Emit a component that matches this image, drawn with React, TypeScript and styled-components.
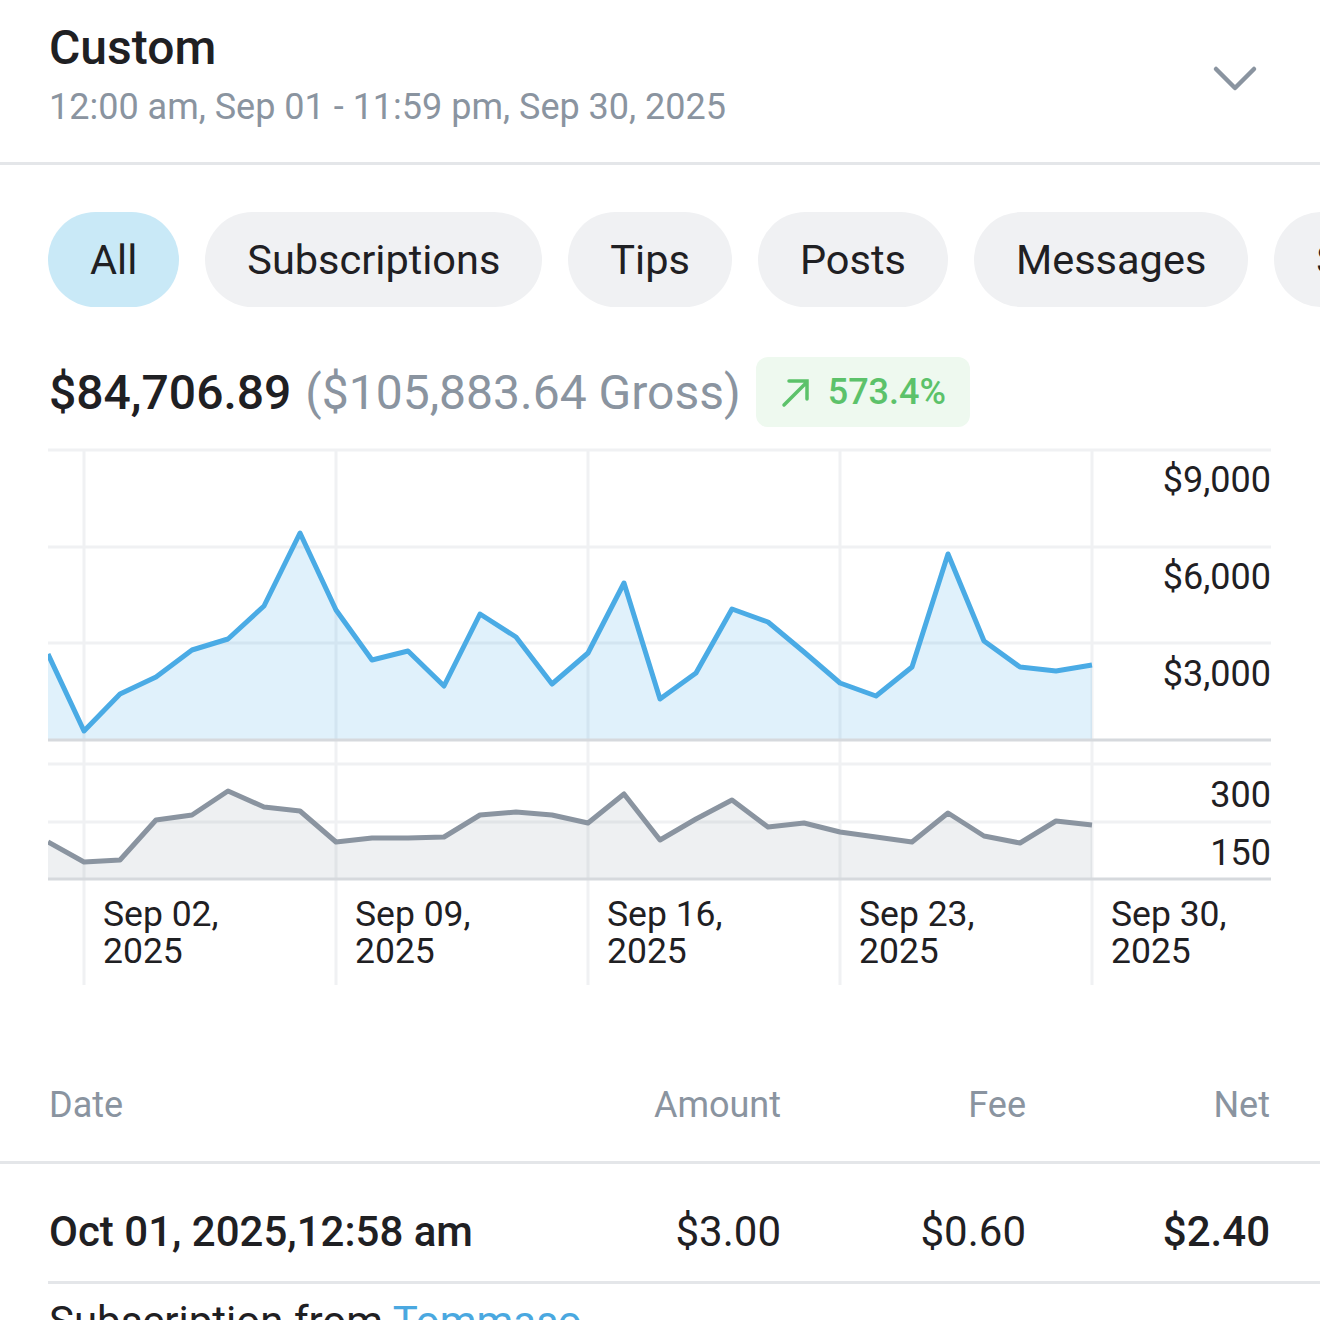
import styled, { createGlobalStyle } from "styled-components";

const GlobalStyle = createGlobalStyle`
  html, body {
    margin: 0;
    padding: 0;
    background: #ffffff;
  }
  body {
    font-family: Roboto, "Noto Sans", "Liberation Sans", sans-serif;
    color: #1f2023;
    overflow: hidden;
  }
`;

const Page = styled.div`
  width: 1320px;
  height: 1320px;
  overflow: hidden;
`;

const Header = styled.header`
  height: 165px;
  box-sizing: border-box;
  padding: 20px 62px 0 49px;
  display: flex;
  align-items: flex-start;
  justify-content: space-between;
  border-bottom: 3px solid #e4e6e9;
`;

const TitleBlock = styled.div`
  display: flex;
  flex-direction: column;
`;

const Title = styled.h1`
  margin: 0;
  font-size: 48px;
  line-height: 56px;
  font-weight: 500;
  color: #1f2023;
`;

const Subtitle = styled.div`
  margin-top: 10px;
  font-size: 36px;
  line-height: 42px;
  color: #8a94a0;
`;

const Chevron = styled.svg`
  margin-top: 45px;
  width: 46px;
  height: 28px;
`;

const ChipRow = styled.div`
  margin-top: 47px;
  padding-left: 48px;
  display: flex;
  gap: 26px;
  overflow: hidden;
  white-space: nowrap;
`;

const Chip = styled.div<{ $active?: boolean }>`
  flex: none;
  height: 95px;
  padding: 0 42px;
  border-radius: 48px;
  display: flex;
  align-items: center;
  font-size: 41.5px;
  color: #1f2023;
  background: ${(p) => (p.$active ? "#c9e9f7" : "#f0f1f3")};
`;

const TotalRow = styled.div`
  margin-top: 50px;
  height: 70px;
  padding-left: 49px;
  display: flex;
  align-items: center;
`;

const Net = styled.span`
  font-size: 48px;
  font-weight: 500;
  color: #1f2023;
`;

const Gross = styled.span`
  margin-left: 14px;
  font-size: 48px;
  color: #8a94a0;
`;

const Badge = styled.div`
  margin-left: 15px;
  height: 70px;
  padding: 0 24px;
  box-sizing: border-box;
  border-radius: 12px;
  background: #eef9ef;
  display: flex;
  align-items: center;
  gap: 16px;
  font-size: 36px;
  font-weight: 500;
  color: #5cc26a;
`;

const ChartWrap = styled.div`
  margin-top: 21px;
  padding: 0 49px 0 48px;
`;

const ChartSvg = styled.svg`
  display: block;
  width: 1223px;
  height: 540px;
  font-family: Roboto, "Noto Sans", sans-serif;
`;

const TableHead = styled.div`
  display: grid;
  grid-template-columns: 1fr 200px 245px 244px;
  padding: 97px 50px 36px 49px;
  font-size: 36px;
  line-height: 40px;
  color: #8a94a0;
  border-bottom: 3px solid #e4e6e9;
`;

const Cell = styled.div<{ $right?: boolean }>`
  text-align: ${(p) => (p.$right ? "right" : "left")};
`;

const TableRow = styled.div`
  margin-left: 48px;
  display: grid;
  grid-template-columns: 1fr 200px 245px 244px;
  padding: 46px 50px 27px 1px;
  font-size: 42px;
  line-height: 44px;
  color: #1f2023;
  border-bottom: 3px solid #e4e6e9;
`;

const RowCell = styled.div<{ $right?: boolean; $bold?: boolean }>`
  text-align: ${(p) => (p.$right ? "right" : "left")};
  font-weight: ${(p) => (p.$bold ? 500 : 400)};
`;

const Note = styled.div`
  padding: 14px 49px 0;
  font-size: 42px;
  line-height: 48px;
  color: #1f2023;
`;

const Link = styled.span`
  color: #4aa8e0;
`;

const chips = ["All", "Subscriptions", "Tips", "Posts", "Messages", "Streams"];

const earnings = [
  654, 731, 694, 677, 650, 639, 606, 533, 610, 660, 651, 686, 614, 637, 684,
  653, 583, 699, 673, 609, 622, 652, 683, 696, 667, 554, 641, 667, 671, 665,
];

const counts = [
  842, 862, 860, 820, 815, 791, 807, 811, 842, 838, 838, 837, 815, 812, 815,
  823, 794, 840, 819, 800, 827, 823, 832, 837, 842, 813, 836, 843, 821, 825,
];

const xAt = (i: number) => 48 + 36 * i;

const linePath = (ys: number[]) =>
  ys.map((y, i) => `${i === 0 ? "M" : "L"}${xAt(i)} ${y}`).join(" ");

const areaPath = (ys: number[], base: number) =>
  `${linePath(ys)} L${xAt(ys.length - 1)} ${base} L48 ${base} Z`;

const weekX = [84, 336, 588, 840, 1092];
const weekLabels = ["Sep 02,", "Sep 09,", "Sep 16,", "Sep 23,", "Sep 30,"];

function Chart() {
  return (
    <ChartSvg viewBox="48 448 1223 540">
      {/* horizontal grid */}
      {[450, 547, 643, 764, 822].map((y) => (
        <line key={y} x1={48} x2={1271} y1={y} y2={y} stroke="#f0f1f3" strokeWidth={3} />
      ))}
      {/* vertical grid */}
      {weekX.map((x) => (
        <line key={x} x1={x} x2={x} y1={450} y2={985} stroke="#f0f1f3" strokeWidth={3} />
      ))}

      <path d={areaPath(earnings, 740)} fill="#4aaee6" fillOpacity={0.17} />
      <path
        d={linePath(earnings)}
        fill="none"
        stroke="#4aabe5"
        strokeWidth={5}
        strokeLinejoin="round"
      />
      <line x1={48} x2={1271} y1={740} y2={740} stroke="#d6d9dd" strokeWidth={3} />

      <path d={areaPath(counts, 879)} fill="#8a94a0" fillOpacity={0.14} />
      <path
        d={linePath(counts)}
        fill="none"
        stroke="#8a94a0"
        strokeWidth={5}
        strokeLinejoin="round"
      />
      <line x1={48} x2={1271} y1={879} y2={879} stroke="#d6d9dd" strokeWidth={3} />

      <g fontSize={36} fill="#1f2023" textAnchor="end">
        <text x={1271} y={492}>$9,000</text>
        <text x={1271} y={589}>$6,000</text>
        <text x={1271} y={686}>$3,000</text>
        <text x={1271} y={807}>300</text>
        <text x={1271} y={865}>150</text>
      </g>
      <g fontSize={35.5} fill="#1f2023">
        {weekX.map((x, i) => (
          <text key={x} x={x + 19} y={926}>
            <tspan x={x + 19}>{weekLabels[i]}</tspan>
            <tspan x={x + 19} dy={37}>2025</tspan>
          </text>
        ))}
      </g>
    </ChartSvg>
  );
}

export default function App() {
  return (
    <Page>
      <GlobalStyle />
      <Header>
        <TitleBlock>
          <Title>Custom</Title>
          <Subtitle>12:00 am, Sep 01 - 11:59 pm, Sep 30, 2025</Subtitle>
        </TitleBlock>
        <Chevron viewBox="0 0 46 28">
          <path
            d="M4 4 L23 23 L42 4"
            fill="none"
            stroke="#8a94a0"
            strokeWidth={4.5}
            strokeLinecap="round"
            strokeLinejoin="round"
          />
        </Chevron>
      </Header>

      <ChipRow>
        {chips.map((c, i) => (
          <Chip key={c} $active={i === 0}>
            {c}
          </Chip>
        ))}
      </ChipRow>

      <TotalRow>
        <Net>$84,706.89</Net>
        <Gross>($105,883.64 Gross)</Gross>
        <Badge>
          <svg width="32" height="32" viewBox="0 0 32 32">
            <path
              d="M4 29 L27 6 M9 5 H27 V23"
              fill="none"
              stroke="#5cc26a"
              strokeWidth={3.5}
              strokeLinecap="round"
            />
          </svg>
          573.4%
        </Badge>
      </TotalRow>

      <ChartWrap>
        <Chart />
      </ChartWrap>

      <TableHead>
        <Cell>Date</Cell>
        <Cell $right>Amount</Cell>
        <Cell $right>Fee</Cell>
        <Cell $right>Net</Cell>
      </TableHead>
      <TableRow>
        <RowCell $bold>Oct 01, 2025,12:58 am</RowCell>
        <RowCell $right>$3.00</RowCell>
        <RowCell $right>$0.60</RowCell>
        <RowCell $right $bold>$2.40</RowCell>
      </TableRow>
      <Note>
        Subscription from <Link>Tommaso</Link>
      </Note>
    </Page>
  );
}
